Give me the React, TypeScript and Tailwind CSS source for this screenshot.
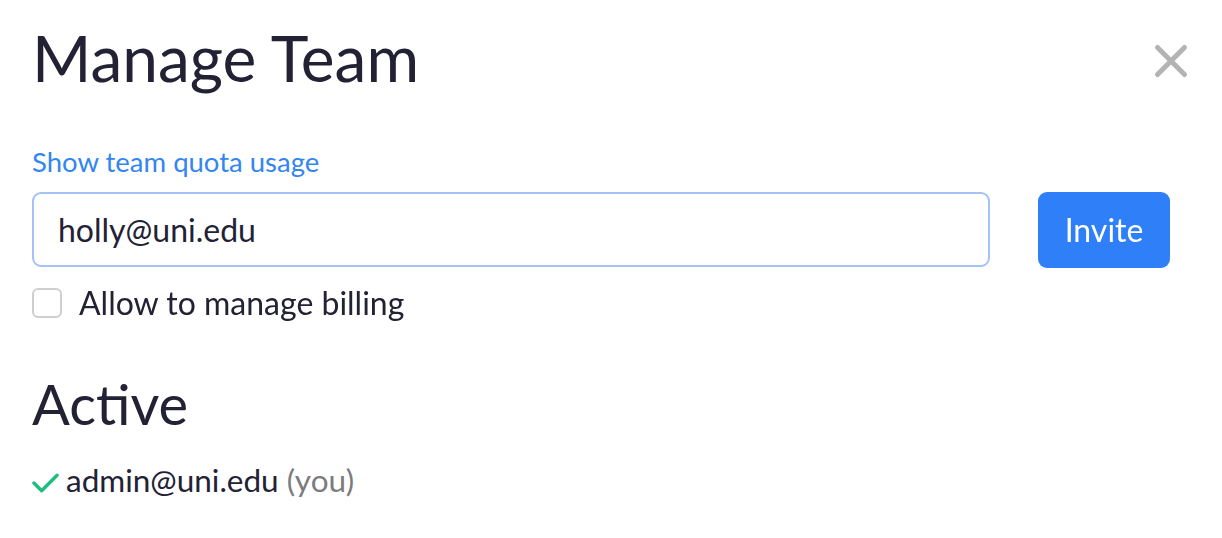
import { useEffect, useRef, useState } from "react";

function CloseIcon() {
  return (
    <svg viewBox="0 0 32 32" className="size-[36px]" fill="none" stroke="#b3b3b3" strokeWidth={4.4} strokeLinecap="round">
      <path d="M4 4 L28 28 M28 4 L4 28" />
    </svg>
  );
}

function CheckIcon() {
  return (
    <svg viewBox="0 0 28 20" className="mt-[5px] h-[20px] w-[27px]" fill="none" stroke="#1fbd7d" strokeWidth={3.5} strokeLinecap="round" strokeLinejoin="round">
      <path d="M2 10 L10 18 L26 2" />
    </svg>
  );
}

export default function App() {
  const [email, setEmail] = useState("holly@uni.edu");
  const [billing, setBilling] = useState(false);
  const inputRef = useRef<HTMLInputElement>(null);

  useEffect(() => {
    const el = inputRef.current;
    if (!el) return;
    el.focus();
    el.setSelectionRange(el.value.length, el.value.length);
  }, []);

  return (
    <div className="min-h-[538px] bg-white pl-[32px] pr-[52px] font-['Lato',sans-serif] text-[#222234]">
      <div className="flex items-start justify-between pt-[26px]">
        <h1 className="text-[64px] font-normal leading-none">Manage Team</h1>
        <button className="mr-[-19px] mt-[17px]" aria-label="Close">
          <CloseIcon />
        </button>
      </div>

      <a href="#" className="mt-[58px] block text-[27.5px] leading-none text-[#3385f0]">
        Show team quota usage
      </a>

      <div className="mt-[16px] flex items-center gap-[48px]">
        <div className="flex h-[75px] flex-1 items-center rounded-[9px] border-2 border-[#a4c3f4] pl-[24px]">
          <input
            ref={inputRef}
            value={email}
            onChange={(e) => setEmail(e.target.value)}
            className="w-full bg-transparent text-[32px] text-[#222234] caret-[#222234] outline-none"
          />
        </div>
        <button className="h-[76px] w-[132px] rounded-[9px] bg-[#2f7ff8] text-[32px] text-white">Invite</button>
      </div>

      <label className="mt-[19px] flex items-center gap-[17px]">
        <input
          type="checkbox"
          checked={billing}
          onChange={(e) => setBilling(e.target.checked)}
          className="size-[30px] appearance-none rounded-[6px] border-2 border-[#cfcfcf] bg-white"
        />
        <span className="text-[32px] leading-none">Allow to manage billing</span>
      </label>

      <h2 className="mt-[57px] text-[56px] font-normal leading-none">Active</h2>

      <div className="mt-[33px] flex items-center gap-[7px] text-[31.5px] leading-none">
        <CheckIcon />
        <span>
          admin@uni.edu <span className="text-[#7b7b80]">(you)</span>
        </span>
      </div>
    </div>
  );
}
